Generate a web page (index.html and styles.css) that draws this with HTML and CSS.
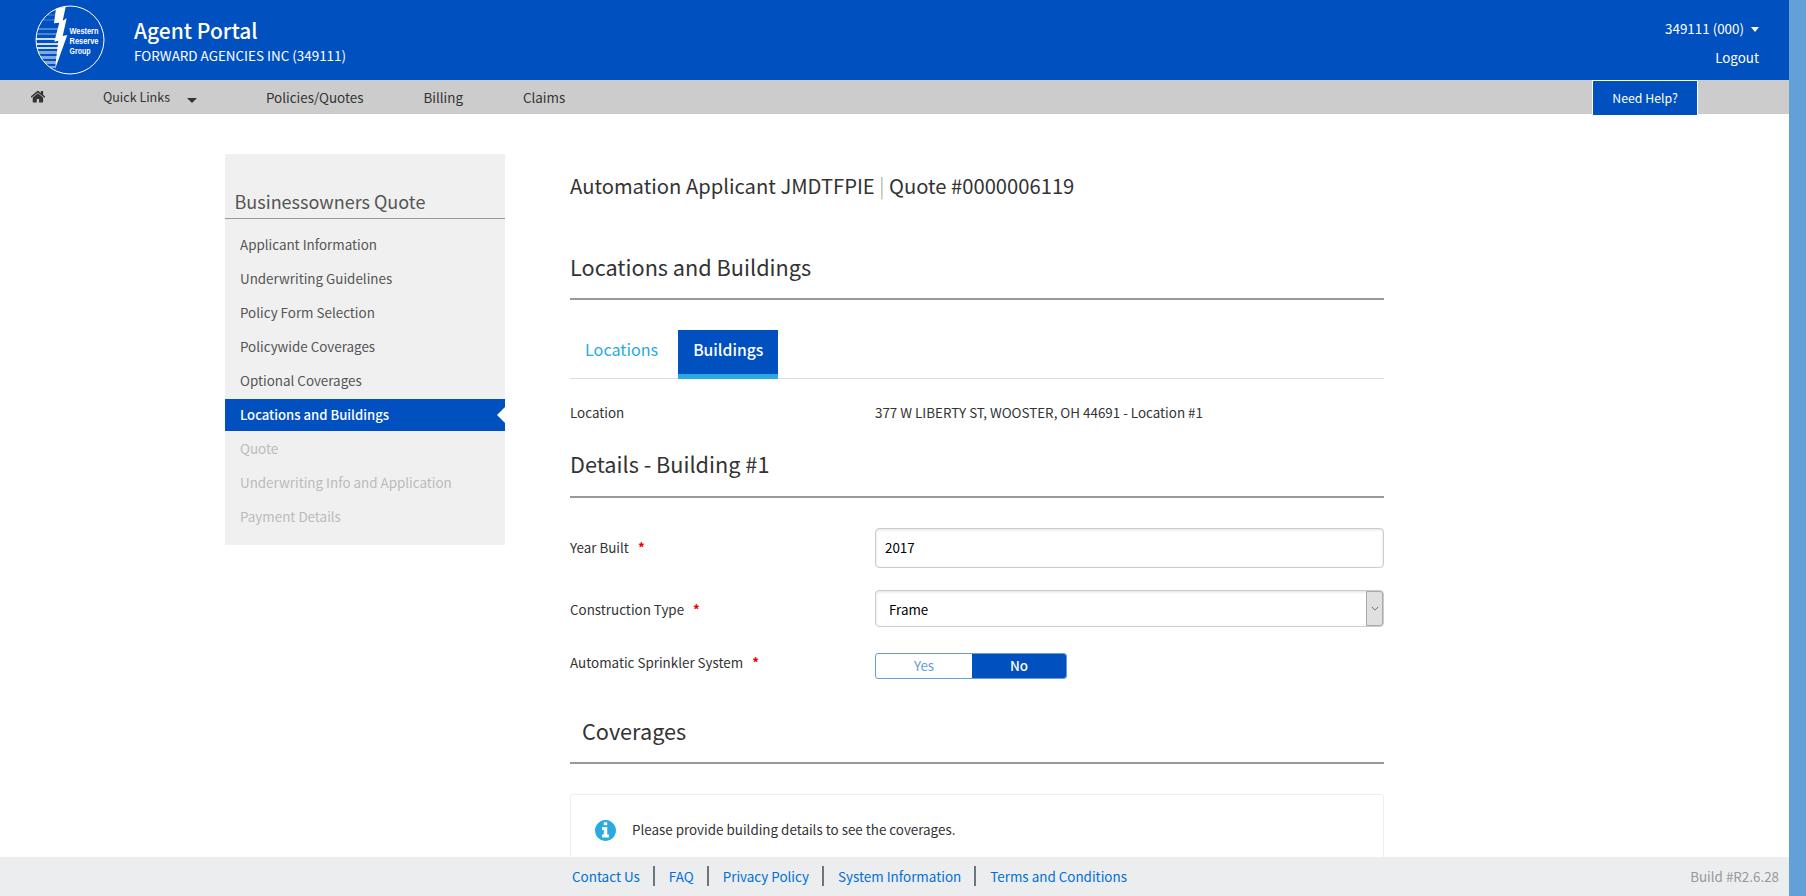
FILE: index.html
```html
<!DOCTYPE html>
<html lang="en">
<head>
<meta charset="utf-8">
<title>Agent Portal</title>
<link rel="stylesheet" href="styles.css">
</head>
<body>
<div class="page">
  <div class="viewport">
    <header class="topbar">
      <svg class="logo" viewBox="0 0 70 70" width="70" height="70" aria-label="Western Reserve Group">
        <defs><clipPath id="disc"><circle cx="35" cy="35" r="34"/></clipPath></defs>
        <g clip-path="url(#disc)">
          <path class="stripe s1" d="M0 9h24v2H0z"/>
          <path class="stripe s1" d="M0 14h24v2H0z"/>
          <path class="stripe s2" d="M0 23h24v2H0z"/>
          <path class="stripe s2" d="M0 28h24v2H0z"/>
          <path class="stripe s3" d="M0 33h22v2H0z"/>
          <path class="stripe s3" d="M0 38h25v2H0z"/>
          <path class="stripe s3" d="M0 42h25v2H0z"/>
          <path class="stripe s4" d="M0 46h25v3H0z"/>
          <path class="stripe s4" d="M0 51h24v3H0z"/>
          <path class="stripe s4" d="M0 56h22v3H0z"/>
          <path class="stripe s4" d="M0 61h20v2H0z"/>
          <path class="bolt" d="M21 3.300L30.700 1.700L27.700 15.700L31.700 13.300L27.700 31L32.300 30L20 64.300L23.300 35.700L19.300 36.700L24.300 17.700L19 18.300Z"/>
        </g>
        <circle class="ring" cx="35" cy="35" r="34"/>
        <text class="logo-text" x="34.500" y="29" textLength="29" lengthAdjust="spacingAndGlyphs">Western</text>
        <text class="logo-text" x="34.500" y="39" textLength="29" lengthAdjust="spacingAndGlyphs">Reserve</text>
        <text class="logo-text" x="34.500" y="49" textLength="21" lengthAdjust="spacingAndGlyphs">Group</text>
      </svg>
      <div class="brand">
        <div class="brand-title">Agent Portal</div>
        <div class="brand-sub">FORWARD AGENCIES INC (349111)</div>
      </div>
      <div class="account">
        <div class="account-id">349111 (000)<span class="caret caret-white"></span></div>
        <div class="logout">Logout</div>
      </div>
    </header>
    <nav class="navbar">
      <svg class="home" viewBox="64 160 1664 1440" width="15" height="13"><path d="M1408 992v480q0 26-19 45t-45 19h-384v-384h-256v384h-384q-26 0-45-19t-19-45v-480q0-1 .5-3t.5-3l575-474 575 474q1 2 1 6zm223-69l-62 74q-8 9-21 11h-3q-13 0-21-7l-692-577-692 577q-12 8-24 7-13-2-21-11l-62-74q-8-10-7-23.500t11-21.500l719-599q32-26 76-26t76 26l244 204v-195q0-14 9-23t23-9h192q14 0 23 9t9 23v408l219 182q10 8 11 21.500t-7 23.500z"/></svg>
      <a class="nav-link quick">Quick Links<span class="caret caret-dark"></span></a>
      <a class="nav-link policies">Policies/Quotes</a>
      <a class="nav-link billing">Billing</a>
      <a class="nav-link">Claims</a>
      <a class="help">Need Help?</a>
    </nav>
    <div class="content">
      <aside class="sidebar">
        <div class="side-title">Businessowners Quote</div>
        <ul class="side-list">
          <li class="side-item">Applicant Information</li>
          <li class="side-item">Underwriting Guidelines</li>
          <li class="side-item">Policy Form Selection</li>
          <li class="side-item">Policywide Coverages</li>
          <li class="side-item">Optional Coverages</li>
          <li class="side-item active">Locations and Buildings</li>
          <li class="side-item off">Quote</li>
          <li class="side-item off">Underwriting Info and Application</li>
          <li class="side-item off">Payment Details</li>
        </ul>
      </aside>
      <main class="main">
        <h1 class="quote-title">Automation Applicant JMDTFPIE <span class="pipe">|</span> Quote #0000006119</h1>
        <h2 class="section first">Locations and Buildings</h2>
        <div class="tabs">
          <a class="tab">Locations</a>
          <a class="tab current">Buildings</a>
        </div>
        <div class="row loc"><span>Location</span><span>377 W LIBERTY ST, WOOSTER, OH 44691 - Location #1</span></div>
        <h2 class="section details">Details - Building #1</h2>
        <div class="row year"><label class="lift">Year Built <b class="req">*</b></label><input class="field year-input" value="2017"></div>
        <div class="row ctype"><label>Construction Type <b class="req">*</b></label>
          <div class="select-wrap">
            <select class="field select"><option>Frame</option></select>
            <span class="arrow"><svg viewBox="0 0 10 6" width="8" height="5"><path d="M1 1l4 4 4-4" fill="none" stroke="#555" stroke-width="1"/></svg></span>
          </div>
        </div>
        <div class="row sprink"><label class="lift">Automatic Sprinkler System <b class="req">*</b></label>
          <div class="toggle"><span class="opt">Yes</span><span class="opt on">No</span></div>
        </div>
        <h2 class="section cov">Coverages</h2>
        <div class="notice">
          <svg class="info" viewBox="128 128 1536 1536" width="21" height="21"><path d="M1152 1376v-160q0-14-9-23t-23-9h-96v-512q0-14-9-23t-23-9h-320q-14 0-23 9t-9 23v160q0 14 9 23t23 9h96v320h-96q-14 0-23 9t-9 23v160q0 14 9 23t23 9h448q14 0 23-9t9-23zm-128-896v-160q0-14-9-23t-23-9h-192q-14 0-23 9t-9 23v160q0 14 9 23t23 9h192q14 0 23-9t9-23zm640 416q0 209-103 385.500t-279.500 279.500-385.500 103-385.500-103-279.500-279.500-103-385.500 103-385.500 279.500-279.500 385.500-103 385.500 103 279.500 279.500 103 385.500z"/></svg>
          <span class="notice-text">Please provide building details to see the coverages.</span>
        </div>
      </main>
    </div>
    <footer class="footer">
      <a class="foot-link">Contact Us</a>
      <a class="foot-link">FAQ</a>
      <a class="foot-link">Privacy Policy</a>
      <a class="foot-link">System Information</a>
      <a class="foot-link">Terms and Conditions</a>
      <span class="build">Build #R2.6.28</span>
    </footer>
  </div>
  <div class="scrollbar"></div>
</div>
</body>
</html>
```
FILE: styles.css
```css
* { box-sizing: border-box; }
html, body { margin: 0; height: 100%; overflow: hidden; }
body {
  font-family: "Noto Sans CJK JP", "Noto Sans", sans-serif;
  font-size: 13.400px;
  line-height: 20px;
  color: #333;
  background: #fff;
}
a { text-decoration: none; }
.page { display: flex; height: 896px; }
.viewport { flex: 1; min-width: 0; display: flex; flex-direction: column; }
.scrollbar { width: 17px; background: #64a0d8; }

.topbar {
  height: 80px;
  background: #0050bf;
  color: #fff;
  display: flex;
  align-items: center;
  padding: 0 30px 0 35px;
}
.logo { flex: none; margin-right: 29px; }
.ring { fill: none; stroke: #fff; stroke-width: 1; }
.bolt { fill: #fff; }
.stripe { fill: #fff; }
.s1 { opacity: .15; }
.s2 { opacity: .3; }
.s3 { opacity: .8; }
.s4 { opacity: .5; }
.logo-text { fill: #fff; font-family: "Liberation Sans", sans-serif; font-size: 9px; font-weight: 700; }
.brand { flex: 1; }
.brand-title { font-size: 21px; line-height: 30px; font-weight: 500; }
.brand-sub { font-size: 13.450px; line-height: 20px; }
.account { text-align: right; align-self: flex-start; }
.account-id { font-size: 13.400px; line-height: 20px; margin-top: 18px; }
.logout { font-size: 13.400px; line-height: 20px; margin-top: 9px; }
.caret { display: inline-block; width: 0; height: 0; }
.caret-white { border-left: 4px solid transparent; border-right: 4px solid transparent; border-top: 5px solid #fff; margin-left: 7px; vertical-align: 2px; }
.caret-dark { border-left: 5px solid transparent; border-right: 5px solid transparent; border-top: 5px solid #333; margin-left: 17px; vertical-align: -1px; }

.navbar {
  height: 34px;
  background: #ccc;
  display: flex;
  align-items: center;
  padding-left: 31px;
  position: relative;
}
.home { fill: #333; flex: none; margin-right: 57px; margin-top: -1px; }
.nav-link { color: #333; font-size: 13.400px; white-space: nowrap; }
.quick { margin-right: 69px; margin-top: -1px; font-size: 12.500px; }
.policies { margin-right: 60px; }
.billing { margin-right: 60px; }
.help {
  position: absolute;
  left: 1592px;
  top: 0;
  width: 106px;
  height: 35px;
  background: #0050bf;
  border: 1px solid #fff;
  border-bottom: 0;
  color: #fff;
  font-size: 12.300px;
  line-height: 35px;
  text-align: center;
  z-index: 2;
}

.content {
  flex: 1;
  min-height: 0;
  overflow: hidden;
  display: flex;
  align-items: flex-start;
  padding: 40px 0 0 225px;
  gap: 65px;
}
.sidebar {
  width: 280px;
  height: 391px;
  flex: none;
  background: #f0f0f0;
  padding-top: 32px;
}
.side-title {
  font-size: 18px;
  line-height: 30px;
  color: #555;
  padding-left: 9.500px;
  border-bottom: 1px solid #999;
  height: 33px;
  margin-bottom: 10px;
}
.side-list { list-style: none; margin: 0; padding: 0; }
.side-item {
  height: 32px;
  line-height: 30px;
  margin-bottom: 2px;
  padding-left: 15px;
  color: #555;
  font-size: 13.400px;
  position: relative;
}
.active { background: #0050bf; color: #fff; font-weight: 500; font-size: 13.100px; line-height: 31px; }
.active::after {
  content: "";
  position: absolute;
  right: 0;
  top: 8px;
  border-top: 8px solid transparent;
  border-bottom: 8px solid transparent;
  border-right: 8px solid #fff;
}
.off { color: #bbb; }

.main { width: 814px; flex: none; }
.quote-title {
  margin: 16px 0 0;
  font-size: 20.200px;
  line-height: 32px;
  font-weight: 400;
  color: #333;
}
.pipe { color: #999; font-weight: 300; }
.section {
  margin: 0;
  font-size: 21.700px;
  line-height: 32px;
  font-weight: 400;
  color: #333;
  border-bottom: 2px solid #999;
  height: 47px;
}
.first { margin-top: 49px; height: 49px; }
.tabs {
  display: flex;
  margin-top: 30px;
  height: 49px;
  border-bottom: 1px solid #ddd;
}
.tab {
  font-size: 16.200px;
  line-height: 39px;
  padding: 0 15px;
  color: #29abe2;
  height: 49px;
}
.tab.current {
  background: #0050bf;
  color: #fff;
  font-size: 15.700px;
  font-weight: 500;
  margin-left: 5px;
  border-bottom: 5px solid #29abe2;
}
.row {
  display: grid;
  grid-template-columns: 305px 1fr;
  align-items: center;
  font-size: 13.400px;
}
.lift { position: relative; top: -1px; }
.loc { margin-top: 23px; height: 20px; }
.details { margin-top: 26px; height: 50px; }
.year { margin-top: 30px; }
.ctype { margin-top: 22px; }
.sprink { margin-top: 26px; align-items: start; }
.req { color: #e00; font-weight: 700; margin-left: 6px; }
.field {
  width: 100%;
  height: 40px;
  border: 1px solid #ccc;
  border-radius: 4px;
  box-shadow: inset 0 1px 3px rgba(0,0,0,.12);
  background: #fff;
  font: inherit;
  color: #000;
  padding: 0 9px;
  outline: none;
}
.year-input { padding-bottom: 2px; }
.select-wrap { position: relative; }
.select { appearance: none; height: 37px; padding-left: 13px; display: block; }
.arrow {
  position: absolute;
  right: 1px;
  top: 1px;
  bottom: 1px;
  width: 17px;
  background: #e0e0e0;
  border: 1px solid #aaa;
  border-radius: 0 3px 3px 0;
  display: flex;
  align-items: center;
  justify-content: center;
}
.toggle {
  width: 192px;
  height: 26px;
  display: flex;
  border: 1px solid #64a0d8;
  border-radius: 3px;
  overflow: hidden;
}
.opt { width: 96px; flex: none; text-align: center; line-height: 22px; font-size: 13.400px; color: #64a0d8; }
.opt.on { width: 94px; background: #0050bf; color: #fff; font-weight: 500; }
.cov { margin-top: 36px; padding-left: 12px; height: 49px; }
.notice {
  margin-top: 30px;
  height: 100px;
  border: 1px solid #eee;
  border-radius: 3px;
  display: flex;
  align-items: flex-start;
  padding: 25px 0 0 24px;
  font-size: 13.400px;
}
.notice-text { line-height: 20px; margin-top: -1px; }
.info { fill: #29abe2; flex: none; margin-right: 16px; }

.footer {
  height: 39px;
  background: #ebedef;
  display: flex;
  align-items: center;
  padding: 0 0 2px 572px;
  position: relative;
  flex: none;
}
.foot-link {
  color: #0070d8;
  font-size: 13.430px;
  line-height: 20px;
  padding-right: 13px;
  margin-right: 14px;
  border-right: 2px solid #6c757d;
}
.foot-link:nth-last-of-type(1) { border-right: 0; }
.build { position: absolute; right: 10px; top: 9px; color: #999; font-size: 13.400px; }
```
